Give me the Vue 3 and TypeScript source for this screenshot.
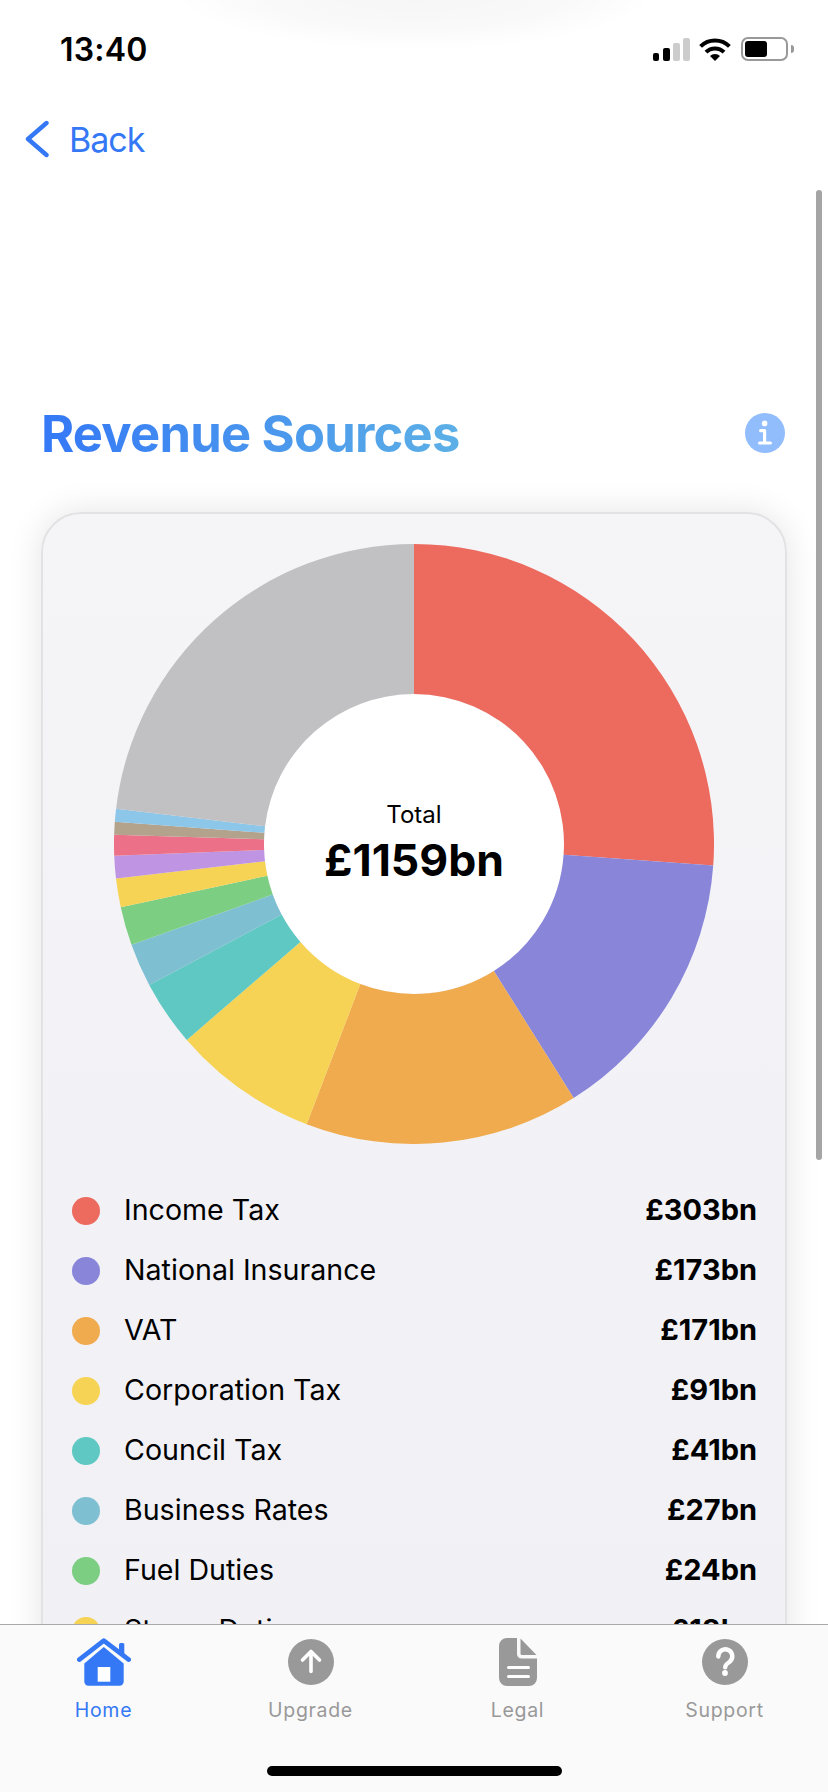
<script setup lang="ts">
import { computed } from 'vue'

interface Source {
  name: string
  amount: number
  color: string
}

const total = 1159

const sources: Source[] = [
  { name: 'Income Tax', amount: 303, color: '#ec6a5e' },
  { name: 'National Insurance', amount: 173, color: '#8986da' },
  { name: 'VAT', amount: 171, color: '#f0ab4e' },
  { name: 'Corporation Tax', amount: 91, color: '#f6d354' },
  { name: 'Council Tax', amount: 41, color: '#5fc8c2' },
  { name: 'Business Rates', amount: 27, color: '#7fbfd2' },
  { name: 'Fuel Duties', amount: 24, color: '#7cce82' },
  { name: 'Stamp Duties', amount: 18, color: '#f6d354' },
  { name: 'slice-9', amount: 14, color: '#be94e3' },
  { name: 'slice-10', amount: 13, color: '#ec7088' },
  { name: 'slice-11', amount: 8, color: '#b4a38c' },
  { name: 'slice-12', amount: 8, color: '#8cc6e9' },
  { name: 'slice-13', amount: 268, color: '#c1c1c3' }
]

// only these rows are on screen, the rest of the list is behind the tab bar
const legendRows = sources.slice(0, 8)

const tabs = ['Home', 'Upgrade', 'Legal', 'Support']

const point = (deg: number, r: number) => {
  const a = ((deg - 90) * Math.PI) / 180
  return `${(300 + r * Math.cos(a)).toFixed(2)} ${(300 + r * Math.sin(a)).toFixed(2)}`
}

const slices = computed(() => {
  let start = 0
  return sources.map((s) => {
    const end = start + (s.amount / total) * 360
    const large = end - start > 180 ? 1 : 0
    const d = `M${point(start, 150)} L${point(start, 300)} A300 300 0 ${large} 1 ${point(end, 300)} L${point(end, 150)} A150 150 0 ${large} 0 ${point(start, 150)} Z`
    start = end
    return { d, color: s.color, name: s.name }
  })
})
</script>

<template>
  <div class="phone">
    <div class="top-glow"></div>

    <header class="status">
      <span class="time">13:40</span>
      <div class="status-icons">
        <div class="signal">
          <i class="b1"></i><i class="b2"></i><i class="b3"></i><i class="b4"></i>
        </div>
        <svg class="wifi" width="32" height="24" viewBox="0 0 32 24">
          <path d="M1.6 9.4A20.5 20.5 0 0 1 30.4 9.4" fill="none" stroke="#000" stroke-width="4" />
          <path d="M7 15.2A12.8 12.8 0 0 1 25 15.2" fill="none" stroke="#000" stroke-width="4" />
          <path d="M16 24L11 19A7 7 0 0 1 21 19Z" fill="#000" />
        </svg>
        <div class="battery"><div class="level"></div></div>
        <div class="nub"></div>
      </div>
    </header>

    <nav class="nav">
      <svg width="24" height="38" viewBox="0 0 24 38">
        <path d="M21.5 3L3 19L21.5 35" fill="none" stroke="#3478f6" stroke-width="4.4" stroke-linecap="round" stroke-linejoin="round" />
      </svg>
      <span class="back">Back</span>
    </nav>

    <main class="scroll">
      <div class="scrollbar"></div>
      <div class="title-row">
        <h1>Revenue Sources</h1>
        <svg width="40" height="40" viewBox="0 0 40 40">
          <circle cx="20" cy="20" r="20" fill="#92bdfc" />
          <circle cx="19.6" cy="10.4" r="2.8" fill="#fff" />
          <path d="M15.6 17.6H19.6V30M14.6 30H25.4" fill="none" stroke="#fff" stroke-width="3.2" stroke-linecap="round" stroke-linejoin="round" />
        </svg>
      </div>

      <section class="card">
        <div class="chart">
          <svg width="600" height="600" viewBox="0 0 600 600">
            <circle cx="300" cy="300" r="150" fill="#fff" />
            <path v-for="s in slices" :key="s.name" :d="s.d" :fill="s.color" />
          </svg>
          <div class="center">
            <span class="center-label">Total</span>
            <span class="center-value">£{{ total }}bn</span>
          </div>
        </div>

        <ul class="legend">
          <li v-for="s in legendRows" :key="s.name">
            <span class="dot" :style="{ background: s.color }"></span>
            <span class="name">{{ s.name }}</span>
            <span class="amount">£{{ s.amount }}bn</span>
          </li>
        </ul>
      </section>
    </main>

    <footer class="tabbar">
      <div class="tabs">
        <div v-for="(tab, i) in tabs" :key="tab" class="tab" :class="{ active: i === 0 }">
          <svg v-if="tab === 'Home'" width="54" height="48" viewBox="0 0 54 48">
            <path d="M26.8 9L7.3 25.5V43.5A4.2 4.2 0 0 0 11.5 47.7H42.5A4.2 4.2 0 0 0 46.7 43.5V25.5Z" fill="#3478f6" />
            <rect x="20.7" y="29" width="12.6" height="14.7" fill="#fff" />
            <path d="M42 14V6.5A1.5 1.5 0 0 1 43.5 5H45.8A1.5 1.5 0 0 1 47.3 6.5V18Z" fill="#3478f6" />
            <path d="M2.3 21.6L26.8 2.6L51.7 21.6" fill="none" stroke="#3478f6" stroke-width="4.6" stroke-linecap="round" stroke-linejoin="round" />
          </svg>
          <svg v-else-if="tab === 'Upgrade'" width="46" height="48" viewBox="0 0 46 48">
            <circle cx="23" cy="24" r="23" fill="#999" />
            <path d="M23 13.5V33.5M14.5 22L23 13.5L31.5 22" fill="none" stroke="#fff" stroke-width="3.6" stroke-linecap="round" stroke-linejoin="round" />
          </svg>
          <svg v-else-if="tab === 'Legal'" width="38" height="48" viewBox="0 0 38 48">
            <path d="M8 0H18V16A4.5 4.5 0 0 0 22.5 20.5H38V40A8 8 0 0 1 30 48H8A8 8 0 0 1 0 40V8A8 8 0 0 1 8 0Z" fill="#999" />
            <path d="M21.5 0.5L37.5 17H23A1.5 1.5 0 0 1 21.5 15.5Z" fill="#999" />
            <path d="M9.5 29.5H29.5M9.5 38.5H29.5" stroke="#fff" stroke-width="3" stroke-linecap="round" />
          </svg>
          <svg v-else width="46" height="48" viewBox="0 0 46 48">
            <circle cx="23" cy="24" r="23" fill="#999" />
            <path d="M16.3 18.5A7 7 0 1 1 27.4 24C24.8 25.6 23.2 26.6 23.2 29.2" fill="none" stroke="#fff" stroke-width="4.4" stroke-linecap="round" />
            <circle cx="23" cy="35" r="2.9" fill="#fff" />
          </svg>
          <span class="tab-label">{{ tab }}</span>
        </div>
      </div>
      <div class="home-bar"></div>
    </footer>
  </div>
</template>

<style>
html,
body {
  margin: 0;
  background: #fff;
}
</style>

<style scoped>
.phone {
  position: relative;
  width: 828px;
  height: 1792px;
  overflow: hidden;
  display: flex;
  flex-direction: column;
  background: #fff;
  font-family: Inter, "Liberation Sans", sans-serif;
  color: #000;
}

.top-glow {
  position: absolute;
  left: 170px;
  top: -75px;
  width: 490px;
  height: 125px;
  background: radial-gradient(closest-side, rgba(0, 0, 0, 0.04), rgba(0, 0, 0, 0.025) 65%, rgba(0, 0, 0, 0));
}

.status {
  position: relative;
  height: 88px;
  flex: none;
  display: flex;
  align-items: center;
  justify-content: space-between;
  padding: 0 34px 0 60px;
  box-sizing: border-box;
}

.time {
  font-size: 32px;
  font-weight: 600;
  letter-spacing: 0.2px;
  line-height: 1;
  padding-top: 12px;
}

.status-icons {
  display: flex;
  align-items: center;
  padding-top: 10px;
}

.signal {
  display: flex;
  align-items: flex-end;
  gap: 3.4px;
  height: 23px;
  margin-right: 9px;
}

.signal i {
  display: block;
  width: 6.8px;
  border-radius: 2px;
  background: #000;
}

.signal .b1 { height: 8px; }
.signal .b2 { height: 13px; }
.signal .b3 { height: 18px; background: #ccc; }
.signal .b4 { height: 23px; background: #ccc; }

.wifi {
  margin-right: 10px;
}

.battery {
  width: 47px;
  height: 24px;
  box-sizing: border-box;
  border: 2px solid #999;
  border-radius: 7px;
  padding: 2px;
}

.level {
  width: 22px;
  height: 100%;
  background: #000;
  border-radius: 3px;
}

.nub {
  width: 3px;
  height: 8px;
  margin-left: 3px;
  background: #999;
  border-radius: 0 3px 3px 0;
}

.nav {
  height: 102px;
  flex: none;
  display: flex;
  align-items: center;
  gap: 20px;
  padding-left: 25px;
  box-sizing: border-box;
}

.back {
  font-size: 34px;
  color: #3478f6;
  letter-spacing: -1px;
}

.scroll {
  position: relative;
  flex: 1;
  min-height: 0;
  overflow: hidden;
  padding: 213px 41px 0;
}

.scrollbar {
  position: absolute;
  top: 0;
  left: 816px;
  width: 6px;
  height: 970px;
  background: #a5a5a5;
  border-radius: 3px;
}

.title-row {
  display: flex;
  align-items: center;
  justify-content: space-between;
  height: 60px;
  margin-bottom: 49px;
  padding-right: 2px;
}

h1 {
  margin: 0;
  font-size: 50.7px;
  font-weight: 700;
  letter-spacing: -0.8px;
  background: linear-gradient(90deg, #3478f6, #5cb0e6);
  -webkit-background-clip: text;
  background-clip: text;
  color: transparent;
}

.card {
  border: 2px solid #e2e2e5;
  border-radius: 40px;
  background: linear-gradient(180deg, #f5f5f8, #f0f0f5);
  box-shadow: 0 0 34px rgba(0, 0, 0, 0.11);
  padding: 30px 28px 60px;
}

.chart {
  position: relative;
  width: 600px;
  height: 600px;
  margin: 0 auto 37px;
}

.chart svg {
  display: block;
}

.center {
  position: absolute;
  inset: 0;
  display: flex;
  flex-direction: column;
  align-items: center;
  justify-content: center;
  gap: 4px;
  padding-bottom: 2px;
}

.center-label {
  font-size: 24px;
}

.center-value {
  font-size: 44.5px;
  font-weight: 700;
}

.legend {
  list-style: none;
  margin: 0;
  padding: 0;
}

.legend li {
  height: 60px;
  display: flex;
  align-items: center;
}

.dot {
  width: 28px;
  height: 28px;
  border-radius: 50%;
  margin-right: 24px;
  margin-left: 1px;
  flex: none;
}

.name {
  flex: 1;
  font-size: 28.6px;
  line-height: 34px;
  padding-bottom: 2px;
}

.amount {
  font-size: 29px;
  font-weight: 700;
  line-height: 34px;
  padding-bottom: 2px;
}

.tabbar {
  position: absolute;
  left: 0;
  right: 0;
  bottom: 0;
  height: 168px;
  box-sizing: border-box;
  border-top: 1px solid #a9a9a9;
  background: #fafafa;
}

.tabs {
  display: grid;
  grid-template-columns: repeat(4, 207px);
  padding-top: 13px;
}

.tab {
  display: flex;
  flex-direction: column;
  align-items: center;
  gap: 12px;
  color: #999;
}

.tab.active {
  color: #3478f6;
}

.tab-label {
  font-size: 19.5px;
  font-weight: 400;
  letter-spacing: 0.7px;
  line-height: 24px;
}

.home-bar {
  position: absolute;
  left: 267px;
  bottom: 16px;
  width: 295px;
  height: 10px;
  border-radius: 5px;
  background: #000;
}
</style>
